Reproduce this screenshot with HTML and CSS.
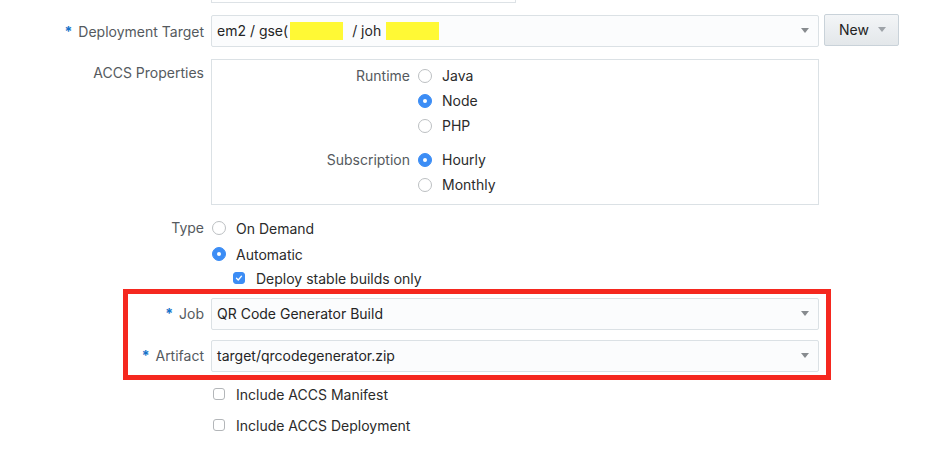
FILE: index.html
```html
<!DOCTYPE html>
<html>
<head>
<meta charset="utf-8">
<link rel="stylesheet" href="styles.css">
</head>
<body>
<div class="page">
  <div class="stub"></div>

  <div class="row row-target">
    <div class="label"><span class="req">*</span> Deployment Target</div>
    <div class="select select-target">
      <span class="val">em2 / gse(<span class="hl hl1"></span>/ joh<span class="hl hl2"></span></span>
      <span class="arrow"></span>
    </div>
    <div class="btn-new">New <span class="arrow arrow-light"></span></div>
  </div>

  <div class="row row-accs">
    <div class="label label-top">ACCS Properties</div>
    <div class="accs-box">
      <div class="sub-group">
        <div class="sub-label">Runtime</div>
        <div class="options">
          <div class="opt"><span class="radio"></span>Java</div>
          <div class="opt"><span class="radio on"></span>Node</div>
          <div class="opt"><span class="radio"></span>PHP</div>
        </div>
      </div>
      <div class="sub-group sub-gap">
        <div class="sub-label">Subscription</div>
        <div class="options">
          <div class="opt"><span class="radio on"></span>Hourly</div>
          <div class="opt"><span class="radio"></span>Monthly</div>
        </div>
      </div>
    </div>
  </div>

  <div class="row row-type">
    <div class="label label-type">Type</div>
    <div class="type-options">
      <div class="topt"><span class="radio"></span>On Demand</div>
      <div class="topt"><span class="radio on"></span>Automatic</div>
      <div class="topt topt-check"><span class="check on"><svg viewBox="0 0 12 12" width="12" height="12"><path d="M3 6.3 L5.1 8.4 L9 3.8" fill="none" stroke="#fff" stroke-width="1.6" stroke-linecap="round" stroke-linejoin="round"/></svg></span>Deploy stable builds only</div>
    </div>
  </div>

  <div class="red-box">
    <div class="row row-job">
      <div class="label label-red"><span class="req">*</span> Job</div>
      <div class="select select-red"><span class="val">QR Code Generator Build</span><span class="arrow"></span></div>
    </div>
    <div class="row row-artifact">
      <div class="label label-red"><span class="req">*</span> Artifact</div>
      <div class="select select-red"><span class="val">target/qrcodegenerator.zip</span><span class="arrow"></span></div>
    </div>
  </div>

  <div class="bottom-checks">
    <div class="bopt"><span class="check"></span>Include ACCS Manifest</div>
    <div class="bopt"><span class="check"></span>Include ACCS Deployment</div>
  </div>
</div>
</body>
</html>
```

FILE: styles.css
```css
html, body {
  margin: 0;
  padding: 0;
  background: #ffffff;
}
body {
  font-family: "Inter", "Roboto", "Liberation Sans", sans-serif;
  font-size: 14px;
  color: #2b2b2b;
}
.page {
  width: 945px;
  height: 449px;
  overflow: hidden;
}
.stub {
  margin-left: 211px;
  width: 303px;
  height: 2px;
  border: 1px solid #dde2e6;
  border-top: none;
}
.row {
  display: flex;
  align-items: center;
}
.label {
  width: 204px;
  flex: none;
  text-align: right;
  color: #555a5e;
  margin-right: 7px;
  box-sizing: border-box;
}
.req {
  color: #1572c9;
  font-weight: 700;
  margin-right: 2px;
}
.row-target {
  margin-top: 12px;
  height: 32px;
}
.select {
  flex: none;
  box-sizing: border-box;
  height: 32px;
  width: 608px;
  border: 1px solid #dbe1e5;
  border-radius: 2px;
  background: #fbfcfd;
  display: flex;
  align-items: center;
  justify-content: space-between;
  padding: 0 9px 1px 5px;
  color: #252525;
}
.val {
  display: flex;
  align-items: center;
  white-space: nowrap;
}
.hl {
  display: inline-block;
  height: 18px;
  background: #fff935;
}
.hl1 {
  width: 53px;
  margin-left: 2px;
  margin-right: 9px;
}
.hl2 {
  width: 53px;
  margin-left: 5px;
}
.arrow {
  display: inline-block;
  width: 0;
  height: 0;
  border-left: 4.5px solid transparent;
  border-right: 4.5px solid transparent;
  border-top: 5px solid #878b8f;
}
.arrow-light {
  border-top-color: #9ea3a8;
  margin-left: 9px;
}
.btn-new {
  flex: none;
  box-sizing: border-box;
  margin-left: 5px;
  margin-top: -3px;
  width: 75px;
  height: 32px;
  border: 1px solid #c9d2d9;
  border-radius: 2px;
  background: linear-gradient(#f3f5f7, #e3e7ea);
  color: #222;
  display: flex;
  align-items: center;
  justify-content: center;
  padding-left: 2px;
}
.row-accs {
  margin-top: 12px;
  align-items: flex-start;
}
.label-top {
  line-height: 25px;
  padding-top: 1px;
}
.accs-box {
  box-sizing: border-box;
  width: 608px;
  height: 146px;
  border: 1px solid #dbe1e5;
  padding: 3px 0 7px 0;
}
.sub-group {
  display: flex;
  align-items: flex-start;
}
.sub-gap {
  margin-top: 9px;
}
.sub-label {
  width: 198px;
  text-align: right;
  line-height: 25px;
  color: #555a5e;
}
.options {
  margin-left: 8px;
}
.opt, .topt, .bopt {
  display: flex;
  align-items: center;
  height: 25px;
  color: #2b2b2b;
}
.radio {
  flex: none;
  box-sizing: border-box;
  width: 14px;
  height: 14px;
  border-radius: 50%;
  border: 1px solid #bcbfc2;
  background: #fff;
  margin-right: 10px;
  position: relative;
}
.radio.on {
  background: #3c8df5;
  border-color: #3c8df5;
}
.radio.on::after {
  content: "";
  position: absolute;
  left: 4px;
  top: 4px;
  width: 4px;
  height: 4px;
  border-radius: 50%;
  background: #fff;
}
.row-type {
  margin-top: 10px;
  align-items: flex-start;
}
.label-type {
  line-height: 25px;
}
.type-options {
  padding-left: 1px;
}
.topt {
  height: 26px;
}
.topt-check {
  height: 22px;
  padding-left: 21px;
}
.check {
  flex: none;
  box-sizing: border-box;
  width: 12px;
  height: 12px;
  border: 1px solid #b3b6b9;
  border-radius: 3px;
  background: #fff;
  margin-right: 11px;
  display: flex;
  align-items: center;
  justify-content: center;
}
.check.on {
  background: #3c8df5;
  border-color: #3c8df5;
}
.check svg {
  display: block;
}
.red-box {
  box-sizing: border-box;
  margin-left: 123px;
  width: 708px;
  height: 91px;
  border: 5px solid #f5281f;
  padding: 4px 7px 0 0;
}
.label-red {
  width: 76px;
  padding-bottom: 2px;
}
.row-job, .row-artifact {
  height: 32px;
}
.row-artifact {
  margin-top: 10px;
}
.bottom-checks {
  margin-left: 213px;
  margin-top: 0;
}
.bopt {
  height: 28px;
}
.bopt + .bopt {
  margin-top: 3px;
}
```
